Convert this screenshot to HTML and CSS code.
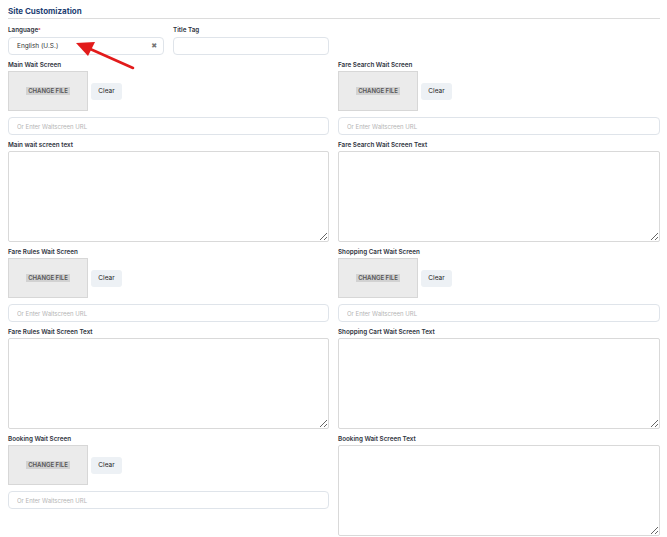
FILE: index.html
```html
<!DOCTYPE html>
<html lang="en">
<head>
    <meta charset="UTF-8">
    <meta name="viewport" content="width=device-width, initial-scale=1.0">
    <title>Site Customization</title>
    <link rel="stylesheet" href="styles.css">
</head>
<body>
<div class="page">
    <h2 class="section-title">Site Customization</h2>

    <div class="form-grid">
        <!-- language + title tag -->
        <div class="pair">
            <div class="field">
                <label>Language<span class="req">*</span></label>
                <div class="select">
                    <span>English (U.S.)</span>
                    <span class="clear-x">&#10006;</span>
                </div>
            </div>
            <div class="field">
                <label>Title Tag</label>
                <input type="text" class="text-input">
            </div>
        </div>
        <div></div>

        <div class="field">
            <label>Main Wait Screen</label>
            <div class="upload">
                <div class="drop"><span class="change-btn">CHANGE FILE</span></div>
                <button class="clear-btn">Clear</button>
            </div>
            <input type="text" class="text-input url" placeholder="Or Enter Waitscreen URL">
        </div>
        <div class="field">
            <label>Fare Search Wait Screen</label>
            <div class="upload">
                <div class="drop"><span class="change-btn">CHANGE FILE</span></div>
                <button class="clear-btn">Clear</button>
            </div>
            <input type="text" class="text-input url" placeholder="Or Enter Waitscreen URL">
        </div>

        <div class="field">
            <label>Main wait screen text</label>
            <textarea></textarea>
        </div>
        <div class="field">
            <label>Fare Search Wait Screen Text</label>
            <textarea></textarea>
        </div>

        <div class="field">
            <label>Fare Rules Wait Screen</label>
            <div class="upload">
                <div class="drop"><span class="change-btn">CHANGE FILE</span></div>
                <button class="clear-btn">Clear</button>
            </div>
            <input type="text" class="text-input url" placeholder="Or Enter Waitscreen URL">
        </div>
        <div class="field">
            <label>Shopping Cart Wait Screen</label>
            <div class="upload">
                <div class="drop"><span class="change-btn">CHANGE FILE</span></div>
                <button class="clear-btn">Clear</button>
            </div>
            <input type="text" class="text-input url" placeholder="Or Enter Waitscreen URL">
        </div>

        <div class="field">
            <label>Fare Rules Wait Screen Text</label>
            <textarea></textarea>
        </div>
        <div class="field">
            <label>Shopping Cart Wait Screen Text</label>
            <textarea></textarea>
        </div>

        <div class="field">
            <label>Booking Wait Screen</label>
            <div class="upload">
                <div class="drop"><span class="change-btn">CHANGE FILE</span></div>
                <button class="clear-btn">Clear</button>
            </div>
            <input type="text" class="text-input url" placeholder="Or Enter Waitscreen URL">
        </div>
        <div class="field">
            <label>Booking Wait Screen Text</label>
            <textarea></textarea>
        </div>
    </div>
</div>

<!-- callout arrow pointing at the language picker -->
<svg class="callout" width="70" height="34" viewBox="0 0 70 34">
    <line x1="59" y1="28" x2="14" y2="8" stroke="#e21b1b" stroke-width="2.6" stroke-linecap="round"/>
    <polygon points="2,3 21,2 14,16" fill="#e21b1b"/>
</svg>
</body>
</html>
```

FILE: styles.css
```css
body{
    margin:0;
    font-family:Inter, "Noto Sans", Arial, sans-serif;
    color:#2c3140;
    background:#fff;
}
.page{padding:0 7px 0 8px;}
.section-title{
    margin:0 0 7px;padding:7px 0 2px;
    font-size:8px;line-height:9px;font-weight:700;color:#1f3f73;
    border-bottom:1px solid #dcdcdc;
}
.form-grid{
    display:grid;grid-template-columns:321px 322px;
    column-gap:9px;row-gap:6px;
}
.pair{display:grid;grid-template-columns:1fr 1fr;column-gap:9px;}
.field{display:flex;flex-direction:column;}
.field label{
    font-size:6.3px;line-height:8px;font-weight:600;color:#2f3340;
    margin-bottom:2px;
}
.pair .field label{margin-bottom:3px;}
.req{color:#e03030;font-size:5px;vertical-align:top;}

.select,.text-input{
    box-sizing:border-box;height:18px;margin:0;
    border:1px solid #dfe4ea;border-radius:4px;background:#fff;
}
.select{
    display:flex;align-items:center;justify-content:space-between;
    padding:0 6px 0 8px;font-size:6.5px;color:#333;
}
.clear-x{font-family:"DejaVu Sans", sans-serif;font-size:7px;color:#777;}
.text-input{padding:0 8px;font-family:inherit;font-size:6px;outline:none;}
.text-input::placeholder{color:#b5b5b5;}
.url{margin-top:6px;width:100%;}

.upload{display:flex;align-items:center;gap:3px;}
.drop{
    box-sizing:border-box;width:80px;height:40px;
    display:flex;align-items:center;justify-content:center;
    background:#ebebeb;border:1px solid #d7d7d7;
}
.change-btn{
    background:#d2d2d2;color:#555;
    font-size:6px;font-weight:600;line-height:8px;padding:0 2px;
}
.clear-btn{
    height:17px;width:31px;padding:0;
    border:none;border-radius:3px;background:#edf1f5;
    font-family:inherit;font-size:6.5px;color:#222;
}
textarea{
    box-sizing:border-box;height:91px;width:100%;margin:0;
    border:1px solid #d9d9d9;border-radius:2px;
    font-family:inherit;font-size:7px;
}
.callout{position:absolute;left:74px;top:40px;}
```
